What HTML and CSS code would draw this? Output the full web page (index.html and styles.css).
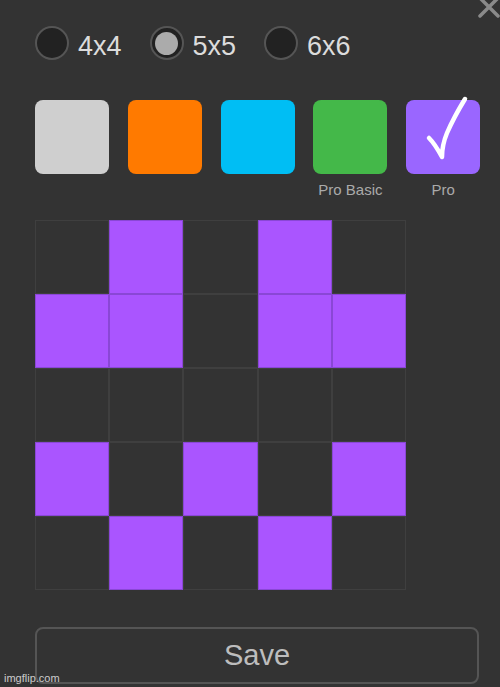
FILE: index.html
```html
<!DOCTYPE html>
<html>
<head>
<meta charset="utf-8">
<link rel="stylesheet" href="styles.css">
</head>
<body>
<div class="panel">
  <svg class="close" width="22" height="20" viewBox="0 0 22 20"><path d="M2 16 L20 -2 M2 -2 L20 16" stroke="#8a8a8a" stroke-width="3.5" stroke-linecap="round" fill="none"/></svg>
  <div class="sizes">
    <label class="opt"><span class="radio"></span><span class="opt-text">4x4</span></label>
    <label class="opt"><span class="radio on"><span class="dot"></span></span><span class="opt-text">5x5</span></label>
    <label class="opt"><span class="radio"></span><span class="opt-text">6x6</span></label>
  </div>
  <div class="swatches">
    <div class="sw-col"><div class="swatch grey"></div></div>
    <div class="sw-col"><div class="swatch orange"></div></div>
    <div class="sw-col"><div class="swatch blue"></div></div>
    <div class="sw-col"><div class="swatch green"></div><div class="sw-label">Pro Basic</div></div>
    <div class="sw-col"><div class="swatch purple"><svg class="check" width="74" height="74" viewBox="0 0 74 74"><path d="M23 38 Q29 44 36 57 Q36 45 41 33 Q48 17 59 -1" stroke="#fff" stroke-width="4.5" stroke-linecap="round" stroke-linejoin="round" fill="none"/></svg></div><div class="sw-label">Pro</div></div>
  </div>
  <div class="grid">
    <div class="cell"></div><div class="cell on"></div><div class="cell"></div><div class="cell on"></div><div class="cell"></div>
    <div class="cell on"></div><div class="cell on"></div><div class="cell"></div><div class="cell on"></div><div class="cell on"></div>
    <div class="cell"></div><div class="cell"></div><div class="cell"></div><div class="cell"></div><div class="cell"></div>
    <div class="cell on"></div><div class="cell"></div><div class="cell on"></div><div class="cell"></div><div class="cell on"></div>
    <div class="cell"></div><div class="cell on"></div><div class="cell"></div><div class="cell on"></div><div class="cell"></div>
  </div>
  <button class="save">Save</button>
  <div class="watermark">imgflip.com</div>
</div>
</body>
</html>
```

FILE: styles.css
```css
html, body {
  margin: 0;
  padding: 0;
  background: #333333;
}
body {
  width: 500px;
  height: 687px;
  overflow: hidden;
  font-family: "Liberation Sans", Arial, sans-serif;
}
.panel {
  position: relative;
  width: 500px;
  height: 687px;
  padding: 26px 0 0 35px;
  box-sizing: border-box;
}
.close {
  position: absolute;
  top: 0;
  right: 0;
}
.sizes {
  display: flex;
  gap: 28px;
  height: 34px;
}
.opt {
  display: flex;
  align-items: center;
  gap: 9px;
}
.radio {
  width: 34px;
  height: 34px;
  box-sizing: border-box;
  border-radius: 50%;
  border: 2px solid #555555;
  background: #222222;
  display: flex;
  align-items: center;
  justify-content: center;
}
.dot {
  width: 23px;
  height: 23px;
  border-radius: 50%;
  background: #ababab;
}
.opt-text {
  font-size: 27px;
  line-height: 34px;
  color: #dcdcdc;
  margin-top: 5px;
}
.swatches {
  display: flex;
  gap: 18.8px;
  margin-top: 40px;
  height: 98px;
}
.sw-col {
  width: 74px;
  display: flex;
  flex-direction: column;
  align-items: center;
}
.swatch {
  position: relative;
  width: 74px;
  height: 74px;
  border-radius: 8px;
}
.grey { background: #cfcfcf; }
.orange { background: #ff7a00; }
.blue { background: #00bef4; }
.green { background: #44b849; }
.purple { background: #9a66ff; }
.check {
  position: absolute;
  left: 0;
  top: 0;
  overflow: visible;
}
.sw-label {
  margin-top: 7px;
  font-size: 15px;
  line-height: 17px;
  color: #aaaaaa;
  white-space: nowrap;
}
.grid {
  margin-top: 22px;
  display: grid;
  grid-template-columns: repeat(5, 74.2px);
  grid-template-rows: repeat(5, 74px);
  width: 371px;
}
.cell {
  box-sizing: border-box;
  border: 1px solid #3f3f3f;
  background: #333333;
}
.cell.on {
  background: #aa55ff;
  border-color: #8a47d6;
}
.save {
  display: block;
  margin-top: 37px;
  width: 444px;
  height: 57px;
  box-sizing: border-box;
  border: 2px solid #555555;
  border-radius: 8px;
  background: #333333;
  color: #bdbdbd;
  font-family: "Liberation Sans", Arial, sans-serif;
  font-size: 29px;
  padding: 0;
}
.watermark {
  position: absolute;
  left: 4px;
  bottom: 3px;
  font-size: 11px;
  line-height: 12px;
  color: rgba(255, 255, 255, 0.75);
}
```
